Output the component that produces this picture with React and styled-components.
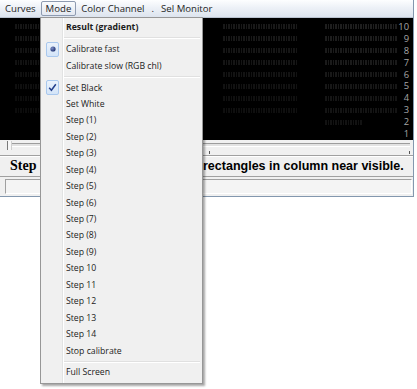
import React from "react";
import styled, { createGlobalStyle } from "styled-components";

const GlobalStyle = createGlobalStyle`
  html, body, #root {
    min-height: 100%;
    height: 100%;
  }
  body {
    margin: 0;
    background: #ffffff;
    font-family: "Open Sans", "Noto Sans", sans-serif;
  }
`;

const menuTitles = ["Curves", "Mode", "Color Channel", ".", "Sel Monitor"];

const levels = [10, 9, 8, 7, 6, 5, 4, 3, 2, 1];

const menuItems = [
  { label: "Result (gradient)", bold: true },
  { sep: true },
  { label: "Calibrate fast", mark: "radio" },
  { label: "Calibrate slow (RGB chl)" },
  { sep: true },
  { label: "Set Black", mark: "check" },
  { label: "Set White" },
  ...Array.from({ length: 9 }, (_, i) => ({ label: `Step (${i + 1})` })),
  ...Array.from({ length: 5 }, (_, i) => ({ label: `Step ${i + 10}` })),
  { label: "Stop calibrate" },
  { sep: true },
  { label: "Full Screen" },
];

const Page = styled.div`
  height: 389px;
`;

const Window = styled.div`
  position: relative;
  width: 413px;
  border-right: 1px solid #8397ae;
  border-bottom: 1px solid #8397ae;
  background: #f0f0f0;
`;

const MenuBar = styled.div`
  display: flex;
  align-items: center;
  height: 18px;
  box-sizing: border-box;
  background: linear-gradient(#fdfeff, #edf1f7 45%, #dde4ee);
  border-bottom: 1px solid #b9c2cf;
`;

const MenuTitle = styled.div`
  height: 15px;
  line-height: 13px;
  padding: 0 ${(p) => p.$pad}px;
  box-sizing: border-box;
  font-size: 9.6px;
  color: #1e1e1e;
  border: 1px solid ${(p) => (p.$active ? "#8e9bb1" : "transparent")};
  border-radius: 2px;
  background: ${(p) =>
    p.$active ? "linear-gradient(#f9fbfd, #e3e8f0)" : "transparent"};
`;

const Canvas = styled.div`
  height: 122px;
  box-sizing: border-box;
  padding-top: 3px;
  background: #000;
`;

const CanvasRow = styled.div`
  display: flex;
  align-items: center;
  height: 11.9px;
  padding-left: 15px;
`;

const Patch = styled.span`
  flex: none;
  width: ${(p) => p.$w}px;
  height: 5px;
  margin-right: ${(p) => p.$gap}px;
  background: repeating-linear-gradient(
    90deg,
    ${(p) => p.$color} 0 2px,
    transparent 2px 3px,
    ${(p) => p.$color} 3px 4px,
    transparent 4px 5px
  );
`;

const Level = styled.span`
  margin-left: auto;
  padding-right: 4px;
  font-size: 9.4px;
  line-height: 12px;
  color: #a6a6a6;
`;

const Trackbar = styled.div`
  position: relative;
  height: 15px;
  box-sizing: border-box;
  padding-top: 3px;
`;

const Groove = styled.div`
  height: 2px;
  margin: 0 3px 0 10px;
  border-top: 1px solid #9c9c9c;
  border-bottom: 1px solid #ffffff;
  background: #e2e2e2;
`;

const Thumb = styled.div`
  position: absolute;
  left: 7px;
  top: 1px;
  width: 3px;
  height: 9px;
  border-left: 1px solid #7a7a7a;
  border-right: 1px solid #cfcfcf;
  background: #f7f7f7;
`;

const TickRow = styled.div`
  display: flex;
  justify-content: space-between;
  padding: 4px 3px 0 209px;
`;

const Tick = styled.span`
  width: 1px;
  height: 3px;
  background: #555;
`;

const Status = styled.div`
  display: grid;
  grid-template-columns: 193px auto;
  align-items: center;
  height: 22px;
  box-sizing: border-box;
  padding-left: 10px;
  border-top: 1px solid #a0a0a0;
  border-bottom: 1px solid #a0a0a0;
  box-shadow: inset 0 1px #ffffff;
  white-space: nowrap;
  overflow: hidden;
  color: #000;
  font: bold 12.5px "Liberation Sans", Arial, sans-serif;
`;

const StatusLead = styled.span`
  overflow: hidden;
`;

const SerifWord = styled.span`
  font: bold 14px "Liberation Serif", serif;
`;

const FieldArea = styled.div`
  height: 19px;
  box-sizing: border-box;
  padding: 2px 1px 2px 5px;
`;

const Field = styled.div`
  height: 100%;
  box-sizing: border-box;
  border: 1px solid;
  border-color: #a0a0a0 #ffffff #ffffff #a0a0a0;
  background: #f4f4f4;
`;

const DropMenu = styled.div`
  position: absolute;
  left: 40px;
  top: 17px;
  width: 163px;
  box-sizing: border-box;
  padding: 1px 2px 2px;
  border: 1px solid #979797;
  background: linear-gradient(
      to right,
      transparent 21px,
      #e2e3e3 21px,
      #e2e3e3 22px,
      #ffffff 22px,
      #ffffff 23px,
      transparent 23px
    ),
    #f0f0f0;
  box-shadow: 2px 2px 2px rgba(0, 0, 0, 0.35);
  z-index: 2;
`;

const Item = styled.div`
  display: grid;
  grid-template-columns: 23px 1fr;
  align-items: center;
  height: 16.45px;
  font-size: 8.7px;
  font-weight: ${(p) => (p.$bold ? 700 : 400)};
  color: #1b1b1b;
  white-space: nowrap;
`;

const IconSlot = styled.span`
  display: flex;
  align-items: center;
  padding-left: 3px;
`;

const MarkBox = styled.span`
  display: flex;
  align-items: center;
  justify-content: center;
  width: 13px;
  height: 15px;
  box-sizing: border-box;
  border: 1px solid #a9c8ee;
  border-radius: 2px;
  background: linear-gradient(#eaf2fc, #d3e4f8);
`;

const Separator = styled.div`
  display: flex;
  align-items: center;
  height: 5.5px;
  margin-left: 21px;

  &::before {
    content: "";
    flex: 1;
    height: 1px;
    border-bottom: 1px solid #ffffff;
    background: #e0e0e0;
  }
`;

const patchColor = (row, group) => {
  if (row <= 1) return "transparent";
  if (row === 2 && group < 3) return "transparent";
  const v = Math.round(7 + row * 1.5 + (group === 3 ? 8 : group === 2 ? 3 : 0));
  return `rgb(${v},${v},${v})`;
};

const groups = [
  { w: 80, gap: 25 },
  { w: 75, gap: 28 },
  { w: 74, gap: 28 },
  { w: 72, gap: 0 },
];

const Mark = ({ type }) => (
  <MarkBox>
    {type === "check" ? (
      <svg width="9" height="9" viewBox="0 0 9 9">
        <path d="M1.2 4.8 L3.4 7.3 L7.8 1.3" fill="none" stroke="#233f8c" strokeWidth="1.5" />
      </svg>
    ) : (
      <svg width="6" height="6" viewBox="0 0 6 6">
        <defs>
          <radialGradient id="dot" cx="0.35" cy="0.35" r="0.7">
            <stop offset="0" stopColor="#7d8fc9" />
            <stop offset="1" stopColor="#1d2f6c" />
          </radialGradient>
        </defs>
        <circle cx="3" cy="3" r="2.6" fill="url(#dot)" />
      </svg>
    )}
  </MarkBox>
);

const App = () => (
  <Page>
    <GlobalStyle />
    <Window>
      <MenuBar>
        {menuTitles.map((t) => (
          <MenuTitle key={t} $active={t === "Mode"} $pad={t === "." ? 1 : 4}>
            {t}
          </MenuTitle>
        ))}
      </MenuBar>
      <Canvas>
        {levels.map((lv) => (
          <CanvasRow key={lv}>
            {groups.map((g, i) => (
              <Patch
                key={i}
                $w={lv === 2 && i === 3 ? 37 : g.w}
                $gap={lv === 2 && i === 3 ? 35 : g.gap}
                $color={patchColor(lv, i)}
              />
            ))}
            <Level>{lv}</Level>
          </CanvasRow>
        ))}
      </Canvas>
      <Trackbar>
        <Groove />
        <Thumb />
        <TickRow>
          <Tick />
          <Tick />
        </TickRow>
      </Trackbar>
      <Status>
        <StatusLead>
          <SerifWord>Step</SerifWord> (1): set black until the
        </StatusLead>
        <span>rectangles in column near visible.</span>
      </Status>
      <FieldArea>
        <Field />
      </FieldArea>
      <DropMenu>
        {menuItems.map((it, i) =>
          it.sep ? (
            <Separator key={i} />
          ) : (
            <Item key={i} $bold={it.bold}>
              <IconSlot>{it.mark && <Mark type={it.mark} />}</IconSlot>
              <span>{it.label}</span>
            </Item>
          )
        )}
      </DropMenu>
    </Window>
  </Page>
);

export default App;
